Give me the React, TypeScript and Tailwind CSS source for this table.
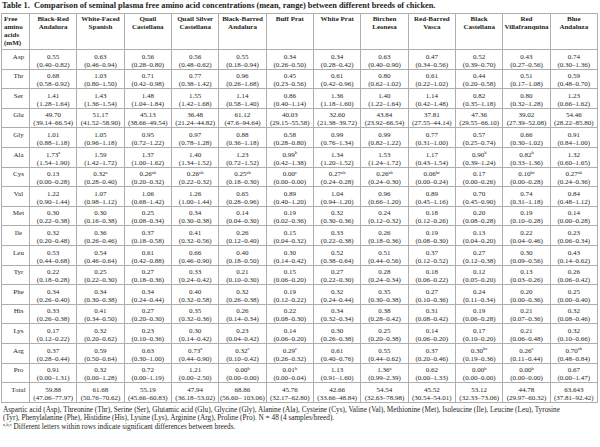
const breeds: string[][] = [
  ["Black-Red", "Andalura"],
  ["White-Faced", "Spanish"],
  ["Quail", "Castellana"],
  ["Quail Silver", "Castellana"],
  ["Black-Barred", "Andalura"],
  ["Buff Prat"],
  ["White Prat"],
  ["Birchen", "Leonesa"],
  ["Red-Barred", "Vasca"],
  ["Black", "Castellana"],
  ["Red", "Villafranquina"],
  ["Blue", "Andaluza"],
];

// each cell: "mean[^sup] low–high"
const rows: [string, string][] = [
  ["Asp", "0.55 0.40–0.82|0.63 0.46–0.94|0.56 0.28–0.80|0.56 0.48–0.62|0.55 0.18–0.94|0.34 0.26–0.50|0.34 0.28–0.42|0.63 0.40–0.90|0.47 0.34–0.56|0.52 0.39–0.70|0.43 0.27–0.56|0.74 0.30–1.36"],
  ["Thr", "0.68 0.58–0.92|1.03 0.80–1.50|0.71 0.42–0.98|0.77 0.38–1.42|0.96 0.26–1.68|0.45 0.23–0.56|0.61 0.42–0.96|0.80 0.62–1.02|0.61 0.22–1.02|0.44 0.20–0.58|0.51 0.17–1.08|0.59 0.48–0.70"],
  ["Ser", "1.41 1.28–1.64|1.43 1.36–1.54|1.48 1.04–1.84|1.55 1.42–1.68|1.14 0.58–1.40|0.86 0.40–1.14|1.36 1.18–1.60|1.40 1.22–1.64|1.14 0.42–1.48|0.82 0.35–1.18|0.80 0.32–1.28|1.23 0.66–1.62"],
  ["Glu", "49.70 39.14–66.54|51.17 41.52–58.90|45.13 38.66–49.54|36.48 21.24–44.82|61.12 47.6–94.64|40.03 29.15–55.58|32.60 21.38–39.72|43.84 23.92–66.54|37.81 27.55–44.14|47.36 29.55–66.10|39.02 27.39–52.08|54.46 28.22–85.80"],
  ["Gly", "1.01 0.88–1.18|1.05 0.96–1.18|0.95 0.72–1.22|0.97 0.78–1.28|0.88 0.36–1.18|0.58 0.28–0.80|0.99 0.76–1.34|0.99 0.82–1.22|0.77 0.31–1.00|0.57 0.25–0.74|0.66 0.30–1.02|0.91 0.84–1.00"],
  ["Ala", "1.73^a 1.54–1.90|1.59 1.42–1.72|1.37 1.00–1.62|1.40 1.34–1.52|1.23 0.72–1.52|0.99^b 0.42–1.38|1.34 1.20–1.52|1.53 1.24–1.72|1.17 0.43–1.54|0.90^b 0.39–1.24|0.82^b 0.33–1.36|1.32 0.60–1.65"],
  ["Cys", "0.13 0.00–0.28|0.32^a 0.28–0.40|0.26^ab 0.20–0.32|0.26^ab 0.22–0.32|0.25^ab 0.18–0.30|0.00^c 0.00–0.00|0.27^ab 0.24–0.28|0.26^ab 0.24–0.30|0.06^bc 0.00–0.24|0.17 0.00–0.26|0.10^bc 0.00–0.28|0.27^ab 0.24–0.36"],
  ["Val", "1.22 0.90–1.44|1.07 0.98–1.12|1.06 0.68–1.42|1.26 1.00–1.44|0.65 0.28–0.96|0.89 0.40–1.20|1.04 0.94–1.20|0.96 0.66–1.20|0.89 0.45–1.16|0.70 0.45–0.90|0.74 0.31–1.18|0.84 0.48–1.12"],
  ["Met", "0.30 0.22–0.38|0.30 0.16–0.38|0.25 0.08–0.34|0.34 0.30–0.38|0.14 0.04–0.30|0.19 0.02–0.36|0.32 0.30–0.36|0.24 0.12–0.32|0.18 0.12–0.26|0.20 0.08–0.28|0.19 0.10–0.28|0.14 0.00–0.28"],
  ["Ile", "0.32 0.20–0.48|0.36 0.26–0.46|0.37 0.18–0.58|0.41 0.32–0.56|0.26 0.12–0.40|0.15 0.04–0.32|0.33 0.22–0.38|0.26 0.18–0.36|0.19 0.08–0.30|0.13 0.04–0.20|0.22 0.04–0.46|0.23 0.06–0.34"],
  ["Leu", "0.53 0.44–0.68|0.54 0.46–0.64|0.61 0.42–0.88|0.66 0.46–0.90|0.40 0.18–0.50|0.30 0.14–0.42|0.52 0.38–0.64|0.51 0.44–0.56|0.37 0.12–0.52|0.27 0.12–0.38|0.30 0.09–0.56|0.43 0.14–0.62"],
  ["Tyr", "0.22 0.18–0.28|0.25 0.22–0.30|0.27 0.18–0.36|0.33 0.24–0.42|0.21 0.10–0.30|0.15 0.06–0.20|0.27 0.22–0.30|0.28 0.24–0.34|0.18 0.06–0.22|0.12 0.05–0.20|0.13 0.03–0.26|0.26 0.06–0.42"],
  ["Phe", "0.34 0.26–0.40|0.34 0.30–0.38|0.34 0.24–0.44|0.40 0.32–0.58|0.32 0.26–0.38|0.19 0.12–0.22|0.32 0.24–0.44|0.35 0.30–0.38|0.27 0.10–0.36|0.24 0.11–0.34|0.20 0.00–0.36|0.25 0.00–0.40"],
  ["His", "0.33 0.26–0.38|0.41 0.34–0.50|0.27 0.20–0.30|0.35 0.32–0.36|0.26 0.14–0.34|0.22 0.08–0.30|0.34 0.32–0.34|0.38 0.28–0.42|0.31 0.08–0.42|0.19 0.06–0.28|0.21 0.07–0.36|0.32 0.08–0.46"],
  ["Lys", "0.17 0.12–0.22|0.32 0.20–0.62|0.23 0.10–0.36|0.30 0.14–0.42|0.23 0.04–0.42|0.14 0.06–0.20|0.30 0.26–0.38|0.25 0.20–0.38|0.14 0.06–0.20|0.17 0.10–0.20|0.21 0.06–0.48|0.32 0.10–0.66"],
  ["Arg", "0.37 0.28–0.44|0.59 0.50–0.64|0.63 0.30–1.00|0.73^a 0.44–0.90|0.32^c 0.10–0.42|0.29^c 0.26–0.32|0.61 0.40–0.76|0.55 0.44–0.62|0.37 0.20–0.46|0.30^bc 0.19–0.36|0.26^c 0.11–0.44|0.70^ab 0.48–0.84"],
  ["Pro", "0.91 0.00–1.31|0.32 0.00–1.28|0.72 0.00–1.19|1.21 0.00–2.50|0.00^b 0.00–0.00|0.01^b 0.00–0.04|1.13 0.91–1.60|1.36^a 0.99–2.39|0.62 0.00–1.33|0.00^b 0.00–0.00|0.00^b 0.00–0.00|0.67 0.00–1.47"],
  ["Total", "59.88 47.06–77.97|61.68 50.76–70.62|55.19 45.66–60.83|47.94 36.18–53.02|68.86 56.60– 103.06|45.76 32.17–62.80|42.66 33.66–48.84|54.54 32.63–78.98|45.52 30.54–54.01|53.12 32.33–73.06|44.78 29.97–60.32|63.643 37.81–92.42"],
];

function ValueCell({ raw }: { raw: string }) {
  const [head, ...rest] = raw.split(" ");
  const [mean, sup] = head.split("^");
  return (
    <div className="flex flex-col items-center whitespace-nowrap bg-white pt-[2.6px] text-[7px] leading-[8px]">
      <span>
        {mean}
        {sup ? <sup className="text-[4.6px]">{sup}</sup> : null}
      </span>
      <span>({rest.join(" ")})</span>
    </div>
  );
}

export default function App() {
  return (
    <div className="h-[447px] w-[600px] overflow-hidden bg-white pt-px font-['Liberation_Serif',serif] text-[#231f20]">
      <p className="whitespace-nowrap pl-[2px] text-[8.3px] font-bold leading-[9px]">
        Table 1.&nbsp; Comparison of seminal plasma free amino acid concentrations (mean, range) between different breeds of chicken.
      </p>

      <div className="ml-px mt-[3px] grid w-[597px] grid-cols-[27px_repeat(12,minmax(0,1fr))] grid-rows-[35px] auto-rows-[18.6px] gap-px border border-[#aeaeae] bg-[#aeaeae]">
        <div className="bg-white pl-[2px] pt-[1.3px] text-[7px] font-bold leading-[8px]">
          Free
          <br />
          amino
          <br />
          acids
          <br />
          (mM)
        </div>
        {breeds.map((lines) => (
          <div
            key={lines.join(" ")}
            className="flex flex-col items-center whitespace-nowrap bg-white pt-[1.3px] text-[7px] font-bold leading-[8px]"
          >
            {lines.map((line) => (
              <span key={line}>{line}</span>
            ))}
          </div>
        ))}

        {rows.map(([label, data]) => (
          <div key={label} className="contents">
            <div className="bg-white pl-[6px] pt-[2.6px] text-center text-[7px] leading-[8px]">
              {label}
            </div>
            {data.split("|").map((cell, i) => (
              <ValueCell key={`${label}-${i}`} raw={cell} />
            ))}
          </div>
        ))}
      </div>

      <div className="mt-[3px] whitespace-nowrap pl-[3px] text-[7.25px] leading-[8.5px]">
        <p>
          Aspartic acid (Asp), Threonine (Thr), Serine (Ser), Glutamic acid (Glu), Glycine (Gly), Alanine (Ala), Cysteine (Cys), Valine (Val), Methionine (Met), Isoleucine (Ile), Leucine (Leu), Tyrosine
          <br />
          (Tyr), Phenylalanine (Phe), Histidine (His), Lysine (Lys), Arginine (Arg), Proline (Pro). N = 48 (4 samples/breed).
        </p>
        <p>
          <sup className="text-[4.6px]">a,b,c</sup> Different letters within rows indicate significant differences between breeds.
        </p>
      </div>
    </div>
  );
}
